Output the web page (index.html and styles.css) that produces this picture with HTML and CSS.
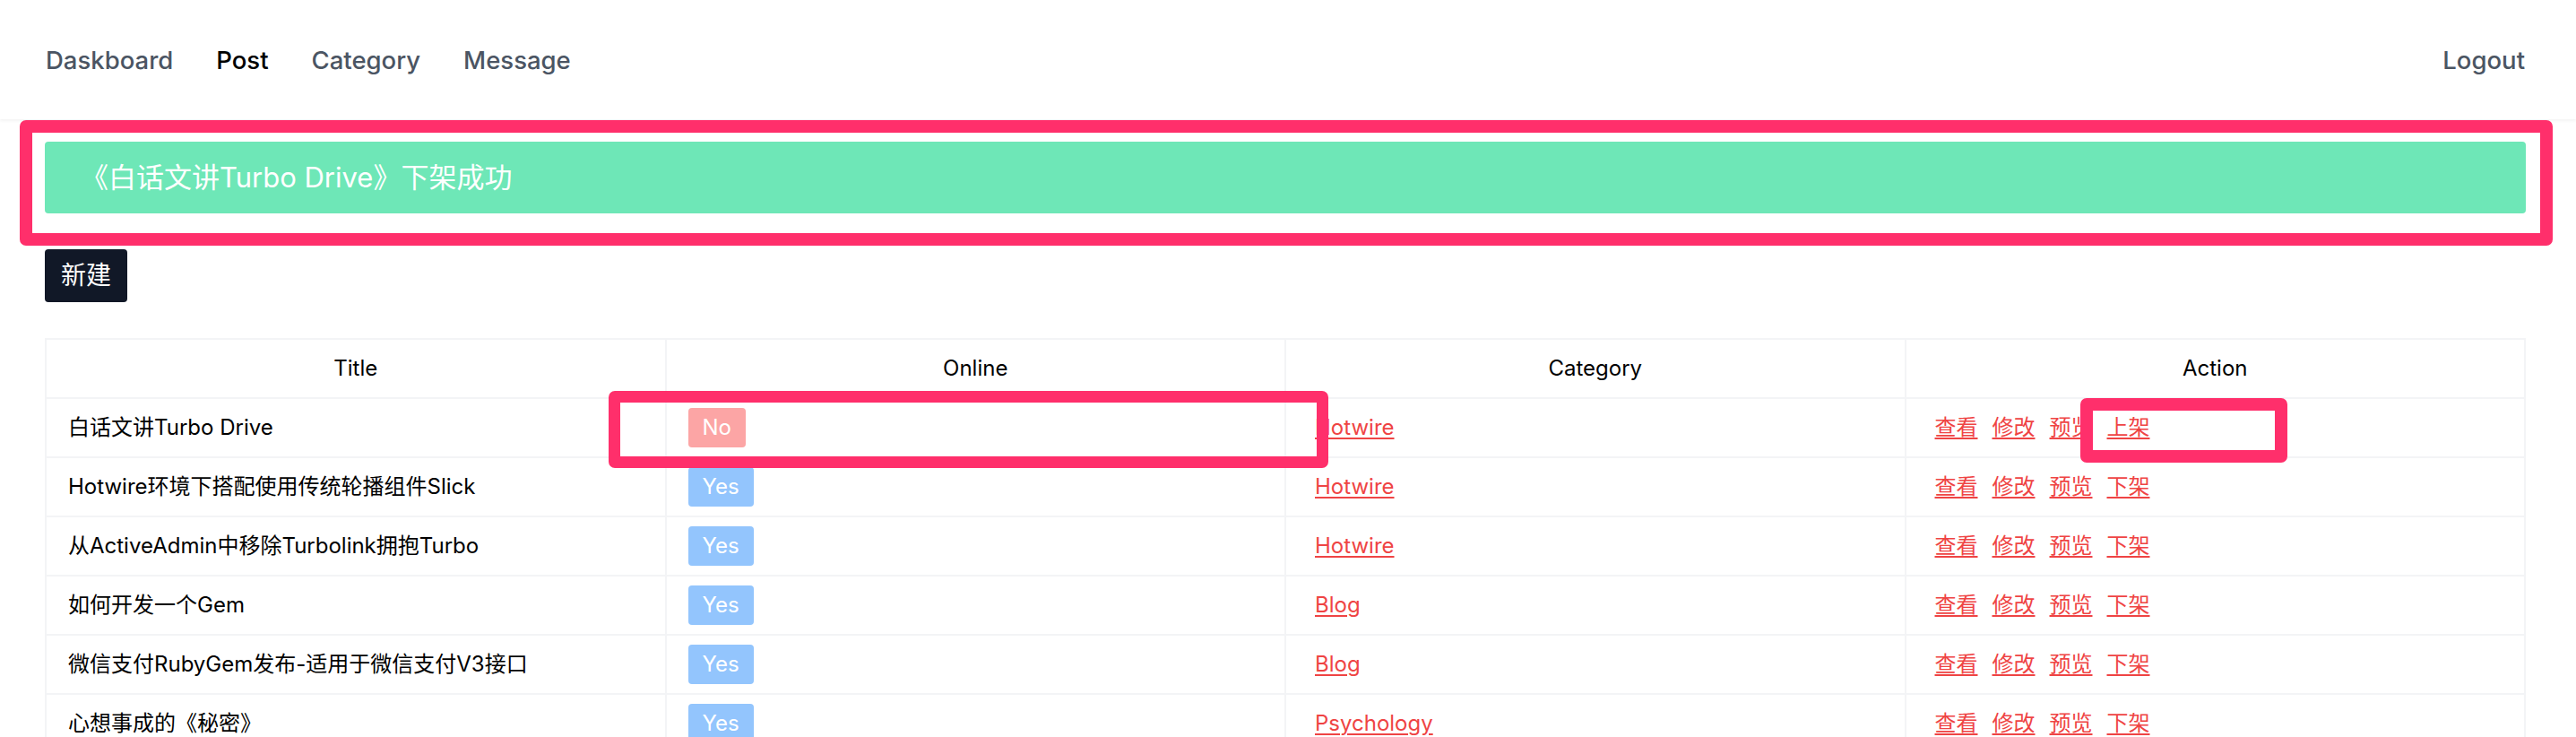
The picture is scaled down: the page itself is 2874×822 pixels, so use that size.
FILE: index.html
```html
<!DOCTYPE html>
<html lang="zh-CN">
<head>
<meta charset="utf-8">
<title>Post</title>
<link rel="stylesheet" href="styles.css">
</head>
<body>
<nav class="nav">
  <div class="nav-links">
    <a href="#">Daskboard</a>
    <a href="#" class="active">Post</a>
    <a href="#">Category</a>
    <a href="#">Message</a>
  </div>
  <a href="#" class="logout">Logout</a>
</nav>
<main class="main">
  <div class="alert">《白话文讲Turbo Drive》下架成功</div>
  <div class="toolbar"><a href="#" class="btn">新建</a></div>
  <table class="posts">
    <thead>
      <tr><th>Title</th><th>Online</th><th>Category</th><th>Action</th></tr>
    </thead>
    <tbody>
      <tr>
        <td>白话文讲Turbo Drive</td>
        <td><span class="badge badge-no">No</span></td>
        <td><a href="#" class="link">Hotwire</a></td>
        <td><a href="#" class="link">查看</a><a href="#" class="link">修改</a><a href="#" class="link">预览</a><a href="#" class="link">上架</a></td>
      </tr>
      <tr>
        <td>Hotwire环境下搭配使用传统轮播组件Slick</td>
        <td><span class="badge badge-yes">Yes</span></td>
        <td><a href="#" class="link">Hotwire</a></td>
        <td><a href="#" class="link">查看</a><a href="#" class="link">修改</a><a href="#" class="link">预览</a><a href="#" class="link">下架</a></td>
      </tr>
      <tr>
        <td>从ActiveAdmin中移除Turbolink拥抱Turbo</td>
        <td><span class="badge badge-yes">Yes</span></td>
        <td><a href="#" class="link">Hotwire</a></td>
        <td><a href="#" class="link">查看</a><a href="#" class="link">修改</a><a href="#" class="link">预览</a><a href="#" class="link">下架</a></td>
      </tr>
      <tr>
        <td>如何开发一个Gem</td>
        <td><span class="badge badge-yes">Yes</span></td>
        <td><a href="#" class="link">Blog</a></td>
        <td><a href="#" class="link">查看</a><a href="#" class="link">修改</a><a href="#" class="link">预览</a><a href="#" class="link">下架</a></td>
      </tr>
      <tr>
        <td>微信支付RubyGem发布-适用于微信支付V3接口</td>
        <td><span class="badge badge-yes">Yes</span></td>
        <td><a href="#" class="link">Blog</a></td>
        <td><a href="#" class="link">查看</a><a href="#" class="link">修改</a><a href="#" class="link">预览</a><a href="#" class="link">下架</a></td>
      </tr>
      <tr>
        <td>心想事成的《秘密》</td>
        <td><span class="badge badge-yes">Yes</span></td>
        <td><a href="#" class="link">Psychology</a></td>
        <td><a href="#" class="link">查看</a><a href="#" class="link">修改</a><a href="#" class="link">预览</a><a href="#" class="link">下架</a></td>
      </tr>
    </tbody>
  </table>
</main>
<div class="mark mark-alert"></div>
<div class="mark mark-online"></div>
<div class="mark mark-action"></div>
</body>
</html>
```

FILE: styles.css
```css
html, body {
  margin: 0;
  padding: 0;
  overflow: hidden;
  background: #ffffff;
}

body {
  position: relative;
  font-family: Inter, "Noto Sans CJK SC", sans-serif;
  color: #000000;
}

.nav {
  height: 133px;
  display: flex;
  align-items: center;
  justify-content: space-between;
  padding: 0 33px 0 27px;
  box-shadow: 0 2px 3px rgba(0, 0, 0, 0.05);
  font-size: 27.5px;
  font-weight: 500;
}

.nav-links {
  display: flex;
}

.nav a {
  padding: 0 24px;
  color: #4b5563;
  text-decoration: none;
}

.nav a.active {
  color: #000000;
}

.main {
  padding: 25px 56px 0 50px;
}

.alert {
  background: #6ee7b7;
  color: #ffffff;
  border-radius: 4px;
  padding: 16px 40px;
  font-size: 31px;
  line-height: 48px;
  margin-bottom: 40px;
}

.toolbar {
  display: flex;
  margin-bottom: 40px;
}

.btn {
  display: block;
  background: #111827;
  color: #ffffff;
  font-size: 28px;
  line-height: 39px;
  padding: 10px 18px;
  border-radius: 4px;
  text-decoration: none;
}

.posts {
  width: 100%;
  border-collapse: collapse;
  table-layout: fixed;
  font-size: 24px;
  line-height: 36px;
}

.posts th,
.posts td {
  border: 2px solid #f3f4f6;
  padding: 14px 24px;
}

.posts th {
  font-weight: 400;
  text-align: center;
}

.posts td {
  padding: 10px 24px;
  text-align: left;
  white-space: nowrap;
}

.badge {
  display: inline-block;
  vertical-align: middle;
  padding: 4px 16px;
  line-height: 36px;
  border-radius: 4px;
  color: #ffffff;
}

.badge-no {
  background: #fca5a5;
}

.badge-yes {
  background: #93c5fd;
}

.link {
  display: inline-block;
  padding: 0 8px;
  color: #ef4444;
  text-decoration: underline;
  text-decoration-thickness: 2px;
  text-underline-offset: 3px;
}

.mark {
  position: absolute;
  box-sizing: border-box;
  border: 14px solid #ff2f6b;
  border-radius: 7px;
  pointer-events: none;
}

.mark-alert {
  left: 22px;
  top: 134px;
  width: 2826px;
  height: 140px;
}

.mark-online {
  left: 679px;
  top: 436px;
  width: 803px;
  height: 86px;
  border-width: 13px;
}

.mark-action {
  left: 2321px;
  top: 444px;
  width: 231px;
  height: 72px;
}
```
